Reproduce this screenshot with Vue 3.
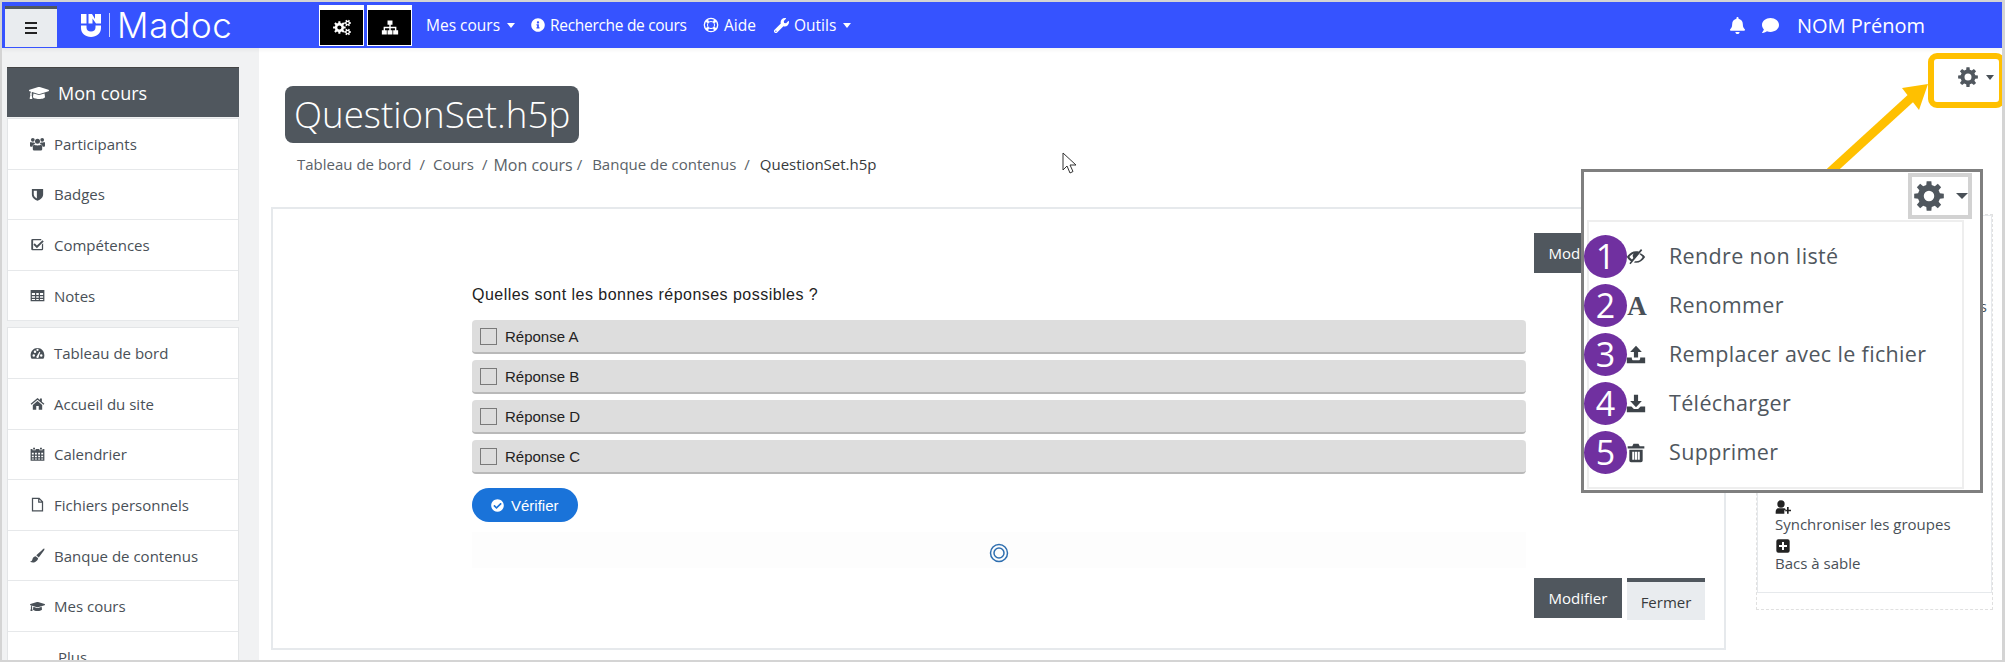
<template>
  <div class="page">
    <header class="nav">
      <button class="burger"><span></span><span></span><span></span></button>
      <div class="logo">
        <svg class="logo-mark" viewBox="0 0 20 23" fill="#fff">
          <rect x="0" y="0" width="5.500" height="9.500" />
          <path d="M7.500 0h3.500l3 5V0H20v9.500h-5l-3.500-5v5h-4z" />
          <path d="M0 11.500h5.500v2c0 2.500 1.800 4 4.500 4s4.500-1.500 4.500-4v-2H20v2.500c0 5.500-4.500 9-10 9S0 19.500 0 14z" />
        </svg>
        <i class="logo-bar"></i>
        <span class="logo-text">Madoc</span>
      </div>
      <div class="blackbtns">
        <div class="blackbtn"><Ico name="cogs" /></div>
        <div class="blackbtn"><Ico name="sitemap" /></div>
      </div>
      <nav class="menu">
        <a class="w1">Mes cours <b class="caret"></b></a>
        <a class="w2"><Ico name="info" />Recherche de cours</a>
        <a class="w3"><Ico name="ring" />Aide</a>
        <a class="w4"><Ico name="wrench" />Outils <b class="caret"></b></a>
      </nav>
      <div class="user">
        <Ico name="bell" class="bell" />
        <Ico name="comment" class="comment" />
        <span class="uname">NOM Prénom</span>
      </div>
    </header>

    <div class="layout">
      <aside class="side">
        <div class="side-head"><Ico name="cap" />Mon cours</div>
        <ul class="side-list">
          <li v-for="it in courseLinks" :key="it.label"><Ico :name="it.icon" />{{ it.label }}</li>
        </ul>
        <ul class="side-list second">
          <li v-for="it in siteLinks" :key="it.label"><Ico :name="it.icon" />{{ it.label }}</li>
          <li class="plus">Plus</li>
        </ul>
      </aside>

      <main class="main">
        <h1 class="title">QuestionSet.h5p</h1>
        <div class="crumbs">
          <span>Tableau de bord</span><i>/</i><span>Cours</span><i>/</i><span class="big">Mon cours</span><i class="tight">/</i><span>Banque de contenus</span><i>/</i><span class="cur">QuestionSet.h5p</span>
        </div>
        <div class="content">
          <section class="card">
            <div class="btnrow top"><button class="btn-dark">Modifier</button></div>
            <div class="h5p">
              <p class="question">Quelles sont les bonnes réponses possibles ?</p>
              <div v-for="a in answers" :key="a" class="answer"><i class="box"></i>{{ a }}</div>
              <button class="check"><Ico name="check" />Vérifier</button>
              <div class="band">
                <svg class="spin" viewBox="0 0 20 20" fill="none" stroke="#2f6fb0"><circle cx="10" cy="10" r="8.500" stroke-width="1.500" /><circle cx="10" cy="10" r="5" stroke-width="1.500" /></svg>
              </div>
            </div>
            <div class="btnrow">
              <button class="btn-dark">Modifier</button>
              <button class="btn-light">Fermer</button>
            </div>
          </section>
          <div class="dash">
            <div class="inner">
              <p class="hidden-item">Contextes</p>
              <div class="tool"><Ico name="userplus" /><span>Synchroniser les groupes</span></div>
              <div class="tool"><Ico name="plussq" /><span>Bacs à sable</span></div>
            </div>
          </div>
        </div>
      </main>
    </div>

    <!-- annotations drawn over the screenshot -->
    <svg class="arrow" viewBox="0 0 110 110">
      <path d="M12 110 93 36" stroke="#ffc000" stroke-width="9" fill="none" />
      <path d="M110 22 84 26 101 48z" fill="#ffc000" />
    </svg>
    <div class="hl"><Ico name="cog" class="hl-cog" /><b class="caret dark"></b></div>
    <svg class="cursor" viewBox="0 0 15 23"><path d="M1 1v17l4-4 3 7 3-1.500-3-6.500h6z" fill="#fff" stroke="#333" stroke-width="1" /></svg>

    <div class="popup">
      <div class="pop-top"><div class="pop-gear"><Ico name="cog" class="pop-cog" /><b class="caret dark big"></b></div></div>
      <ul class="pop-menu">
        <li v-for="(m, i) in actions" :key="m.label">
          <span class="num">{{ i + 1 }}</span>
          <span class="pop-ico"><b v-if="m.letter" class="letter">A</b><Ico v-else :name="m.icon" /></span>
          <span class="pop-label">{{ m.label }}</span>
        </li>
      </ul>
    </div>
  </div>
</template>

<script setup>
import { h } from 'vue'

// cog outlines are computed, the 8 teeth are easier that way
const gear = (cx, cy, ro, ri, hole, n = 8) => {
  const pt = (r, a) => `${(cx + r * Math.cos(a)).toFixed(2)} ${(cy + r * Math.sin(a)).toFixed(2)}`
  let d = ''
  for (let i = 0; i < n; i++) {
    const a = (i * 2 * Math.PI) / n
    const w = Math.PI / n
    d += `${i ? 'L' : 'M'}${pt(ri, a - w * 0.62)}L${pt(ro, a - w * 0.4)}L${pt(ro, a + w * 0.4)}L${pt(ri, a + w * 0.62)}`
  }
  d += `zM${cx - hole} ${cy}a${hole} ${hole} 0 1 0 ${hole * 2} 0a${hole} ${hole} 0 1 0 ${-hole * 2} 0z`
  return d
}

const icons = {
  cog: ['0 0 24 24', gear(12, 12, 12, 9, 4.2)],
  cogs: ['0 0 24 22', gear(8.5, 11, 8.5, 6.2, 2.8) + gear(19.5, 5, 4.5, 3.2, 1.5, 6) + gear(19.5, 17, 4.5, 3.2, 1.5, 6)],
  bell: ['0 0 448 512', 'M224 512c35.32 0 63.97-28.65 63.97-64H160.03c0 35.35 28.65 64 63.97 64zm215.39-149.71c-19.32-20.76-55.47-51.99-55.47-154.29 0-77.7-54.48-139.9-127.94-155.16V32c0-17.67-14.32-32-31.98-32s-31.98 14.33-31.98 32v20.84C118.56 68.1 64.08 130.3 64.08 208c0 102.3-36.15 133.53-55.47 154.29-6 6.45-8.66 14.16-8.61 21.71.11 16.4 12.98 32 32.1 32h383.8c19.12 0 32-15.6 32.1-32 .05-7.55-2.61-15.27-8.61-21.71z'],
  comment: ['0 0 512 512', 'M256 32C114.6 32 0 125.1 0 240c0 49.6 21.4 95 57 130.7C44.5 421.1 2.7 466 2.2 466.5c-2.2 2.3-2.8 5.7-1.5 8.7S4.8 480 8 480c66.3 0 116-31.8 140.6-51.4 32.7 12.3 69 19.4 107.4 19.4 141.4 0 256-93.1 256-208S397.4 32 256 32z'],
  check: ['0 0 512 512', 'M504 256c0 136.967-111.033 248-248 248S8 392.967 8 256 119.033 8 256 8s248 111.033 248 248zM227.314 387.314l184-184c6.248-6.248 6.248-16.379 0-22.627l-22.627-22.627c-6.248-6.249-16.379-6.249-22.628 0L216 308.118l-69.059-69.059c-6.248-6.248-16.379-6.248-22.628 0l-22.627 22.627c-6.248 6.248-6.248 16.379 0 22.627l104 104c6.249 6.249 16.379 6.249 22.628.001z'],
  info: ['0 0 512 512', 'M256 8C119.043 8 8 119.083 8 256c0 136.997 111.043 248 248 248s248-111.003 248-248C504 119.083 392.957 8 256 8zm0 110c23.196 0 42 18.804 42 42s-18.804 42-42 42-42-18.804-42-42 18.804-42 42-42zm56 254c0 6.627-5.373 12-12 12h-88c-6.627 0-12-5.373-12-12v-24c0-6.627 5.373-12 12-12h12v-64h-12c-6.627 0-12-5.373-12-12v-24c0-6.627 5.373-12 12-12h64c6.627 0 12 5.373 12 12v100h12c6.627 0 12 5.373 12 12v24z'],
  wrench: ['0 0 512 512', 'M507.73 109.1c-2.24-9.03-13.54-12.09-20.12-5.51l-74.36 74.36-67.88-11.31-11.31-67.88 74.36-74.36c6.62-6.62 3.43-17.9-5.66-20.16-47.38-11.74-99.55.91-136.58 37.93-39.64 39.64-50.55 97.1-34.05 147.2L18.74 402.76c-24.99 24.99-24.99 65.51 0 90.5 24.99 24.99 65.51 24.99 90.5 0l213.21-213.21c50.12 16.71 107.47 5.68 147.37-34.22 37.07-37.07 49.7-89.32 37.91-136.73zM64 472c-13.25 0-24-10.75-24-24 0-13.26 10.75-24 24-24s24 10.74 24 24c0 13.25-10.75 24-24 24z'],
  cap: ['0 0 640 512', 'M622.34 153.2L343.4 67.5c-15.2-4.67-31.6-4.67-46.79 0L17.66 153.2c-23.54 7.23-23.54 38.36 0 45.59l48.63 14.94c-10.67 13.19-17.23 29.28-17.88 46.9C38.78 266.15 32 276.11 32 288c0 10.78 5.68 19.85 13.86 25.65L20.33 428.53C18.11 438.52 25.71 448 35.94 448h56.11c10.24 0 17.84-9.48 15.62-19.47L82.14 313.65C90.32 307.85 96 298.78 96 288c0-11.57-6.47-21.25-15.66-26.87.76-15.02 8.44-28.3 20.69-36.72L296.6 284.5c9.06 2.78 26.44 6.25 46.79 0l278.95-85.7c23.55-7.24 23.55-38.36 0-45.6zM352.79 315.09c-28.53 8.76-52.84 3.92-65.59 0l-145.02-44.55L128 384c0 35.35 85.96 64 192 64s192-28.65 192-64l-14.18-113.47-145.03 44.56z'],
  users: ['0 0 24 22', 'M12 3.500a4 4 0 1 1 0 8 4 4 0 0 1 0-8zM4.500 2a3 3 0 1 1 0 6 3 3 0 0 1 0-6zm15 0a3 3 0 1 1 0 6 3 3 0 0 1 0-6zM6.500 13c1 .5 2.500 1 5.500 1s4.500-.5 5.500-1c1.500.5 2 2 2 4v3c0 1-1 2-2 2h-11c-1 0-2-1-2-2v-3c0-2 .5-3.500 2-4zM0 10.500C0 9.500.5 8.500 1.500 8.500c1 .7 2 1 3 1h2.300c.3 1 1 1.800 1.700 2.400-2.500.3-4.500 2-4.700 4.100H1.500C.5 16 0 15.500 0 14.500zm24 0v4c0 1-.5 1.500-1.500 1.500h-2.300c-.2-2.100-2.200-3.800-4.700-4.100.7-.6 1.400-1.400 1.700-2.400h2.300c1 0 2-.3 3-1 1 0 1.500 1 1.500 2z'],
  shield: ['0 0 24 24', 'M3 3h18v9c0 5-4 8-9 10-5-2-9-5-9-10zm3 3v6c0 3 3 5 5 6.500V6z'],
  checksq: ['0 0 24 24', 'M4 3h14v2H5v14h14v-7l2-2v9a2 2 0 0 1-2 2H4a2 2 0 0 1-2-2V5a2 2 0 0 1 2-2zm3.500 7L11 13.500 20 5l2 2-11 11-5.500-5.500z'],
  table: ['0 0 24 24', 'M1 3h22v18H1zm2 5v3h5V8zm7 0v3h4V8zm6 0v3h5V8zM3 13v2.500h5V13zm7 0v2.500h4V13zm6 0v2.500h5V13zM3 17.500V19h5v-1.500zm7 0V19h4v-1.500zm6 0V19h5v-1.500z'],
  gauge: ['0 0 24 24', 'M12 3C5.500 3 1 8.500 1 15c0 2 .5 4 1.500 5.500h19C22.500 19 23 17 23 15 23 8.500 18.500 3 12 3zM6 17a2 2 0 1 1 0-4 2 2 0 0 1 0 4zm2-6a2 2 0 1 1 0-4 2 2 0 0 1 0 4zm5.500 7.500a2 2 0 0 1-3 0c-.5-.8-.3-2 .5-2.500l4-7 1.500.7-2.500 7c.5.500.5 1.200-.5 1.800zM12 8a1.800 1.800 0 1 1 0-3.600A1.800 1.800 0 0 1 12 8zm6 9a2 2 0 1 1 0-4 2 2 0 0 1 0 4z'],
  home: ['0 0 24 24', 'M12 3 1 12.500l1.300 1.500L12 6l9.700 8 1.300-1.500-4-3.500V4h-3v2.400zM4.500 14.500V22h5.500v-6h4v6h5.500v-7.500L12 8z'],
  calendar: ['0 0 24 24', 'M5 1h3v3H5zm11 0h3v3h-3zM1 3h3v2h5V3h6v2h5V3h3v19H1zm2 6v3h3V9zm5 0v3h3V9zm5 0v3h3V9zm5 0v3h3V9zM3 14v2.500h3V14zm5 0v2.500h3V14zm5 0v2.500h3V14zm5 0v2.500h3V14zM3 18.500V20h3v-1.500zm5 0V20h3v-1.500zm5 0V20h3v-1.500zm5 0V20h3v-1.500z'],
  file: ['0 0 24 24', 'M3 1h12l6 6v16H3zm2 2v18h14V9h-6V3zm10 .8V7h3.200z'],
  brush: ['0 0 24 24', 'M23 1c.5.500 0 2-1 3.500L14 15l-4-3.500L19.500 3C21 1.500 22.500.500 23 1zM9 13l4 3.500c-.5 3-3 6-6.500 6.500C4 23.300 2 23 0 21.500c2 0 3.500-1 3.800-3C4.200 16 5.500 13.500 9 13z'],
  sitemap: ['0 0 24 24', 'M8.500 2h7v6H13v3h8v5h2.500v6h-7v-6H19v-3h-6v3h2.500v6h-7v-6H11v-3H5v3h2.500v6h-7v-6H3v-5h8V8H8.500z'],
  userplus: ['0 0 24 24', 'M9 2a5.500 5.500 0 1 1 0 11A5.500 5.500 0 0 1 9 2zM1 22v-3c0-3 2-5 4-5h8c2 0 3.500 1.200 4 3h-3v5zM18 12h2.500v4H24v2.500h-3.500V22H18v-3.500h-3V16h3z'],
  plussq: ['0 0 24 24', 'M5 2h14a3 3 0 0 1 3 3v14a3 3 0 0 1-3 3H5a3 3 0 0 1-3-3V5a3 3 0 0 1 3-3zm5.500 4v4.500H6v3h4.500V18h3v-4.500H18v-3h-4.500V6z'],
  eyeoff: ['0 0 24 24', 'M1 12c3-4.500 6.500-7 11-7 1.200 0 2.300.2 3.400.500L18 2.500l1.500 1.300-14 17L4 19.500l2-2.400C4 16 2.300 14.300 1 12zm3 0c.9 1.200 2 2.200 3.200 3l1.600-1.900C8.300 12.400 8 11.300 8 10.500c0-1 .6-2 1.500-2.800C7.500 8.500 5.500 10 4 12zm13.500-4.600c2.200 1.100 4 2.700 5.500 4.600-3 4.500-6.500 7-11 7l-2.500-.3 1.300-1.500h1.200c3.500 0 6.200-1.900 8-5.200-1-1.200-2.400-2.400-3.800-3.200z'],
  upload: ['0 0 24 24', 'M12 1l7 7.500h-4.500V15h-5V8.500H5zM1 15h6v1.500c0 1 .8 1.800 1.800 1.800h6.400c1 0 1.800-.8 1.800-1.800V15h6v7H1z'],
  download: ['0 0 24 24', 'M9.500 1h5v7.500H19L12 16 5 8.500h4.500zM1 15h5.500l3 3h5l3-3H23v7H1z'],
  trash: ['0 0 24 24', 'M9 1h6l1.500 3H22v2.500H2V4h5.500zM4 8h16v13a2 2 0 0 1-2 2H6a2 2 0 0 1-2-2zm3.500 2.500v9.500H10v-9.500zm3.300 0v9.500h2.400v-9.500zm3.200 0v9.500h2.500v-9.500z'],
  ring: ['0 0 24 24', 'M12 1a11 11 0 1 1 0 22 11 11 0 0 1 0-22zM12 7.500a4.500 4.500 0 1 0 0 9 4.500 4.500 0 0 0 0-9zM7.500 4.200A9 9 0 0 1 16.500 4.200L15 6.800A6 6 0 0 0 9 6.800zM19.800 7.500A9 9 0 0 1 19.800 16.500L17.200 15A6 6 0 0 0 17.200 9zM16.500 19.800A9 9 0 0 1 7.500 19.800L9 17.200A6 6 0 0 0 15 17.200zM4.200 16.500A9 9 0 0 1 4.200 7.500L6.800 9A6 6 0 0 0 6.800 15z'],
}

const Ico = (props) => {
  const [vb, d] = icons[props.name]
  return h('svg', { viewBox: vb, class: 'ico', fill: 'currentColor', 'fill-rule': 'evenodd' }, [h('path', { d })])
}
Ico.props = ['name']

const courseLinks = [
  { label: 'Participants', icon: 'users' },
  { label: 'Badges', icon: 'shield' },
  { label: 'Compétences', icon: 'checksq' },
  { label: 'Notes', icon: 'table' },
]
const siteLinks = [
  { label: 'Tableau de bord', icon: 'gauge' },
  { label: 'Accueil du site', icon: 'home' },
  { label: 'Calendrier', icon: 'calendar' },
  { label: 'Fichiers personnels', icon: 'file' },
  { label: 'Banque de contenus', icon: 'brush' },
  { label: 'Mes cours', icon: 'cap' },
]
const answers = ['Réponse A', 'Réponse B', 'Réponse D', 'Réponse C']
const actions = [
  { label: 'Rendre non listé', icon: 'eyeoff' },
  { label: 'Renommer', letter: true },
  { label: 'Remplacer avec le fichier', icon: 'upload' },
  { label: 'Télécharger', icon: 'download' },
  { label: 'Supprimer', icon: 'trash' },
]
</script>

<style>
html, body { margin: 0; background: #fff; }
</style>

<style scoped>
.page { position: relative; width: 2005px; height: 662px; box-sizing: border-box; border: 2px solid #d4d4d4; border-right-width: 3px; overflow: hidden; display: flex; flex-direction: column; font-family: "Open Sans", sans-serif; color: #495057; background: #fff; }
.ico { display: block; width: 16px; height: 16px; flex-shrink: 0; }
p, h1, ul { margin: 0; padding: 0; list-style: none; }
button { font-family: inherit; border: 0; padding: 0; }

.nav { height: 46px; flex-shrink: 0; background: #3653ff; display: flex; align-items: center; color: #fff; box-shadow: 0 2px 4px rgba(0,0,0,.05); z-index: 1; }
.burger { width: 52px; height: 41px; margin: 3px 0 0 3px; background: #e9ecef; border-top: 3px solid #50575e; box-sizing: border-box; display: flex; flex-direction: column; gap: 3px; align-items: center; justify-content: center; }
.burger span { width: 12px; height: 2px; background: #222; }
.logo { display: flex; align-items: center; margin-left: 24px; width: 238px; }
.logo-mark { width: 20px; height: 23px; }
.logo-bar { width: 1px; height: 24px; background: #c9d2ff; margin: 0 7px 0 8px; }
.logo-text { font-family: Inter, sans-serif; font-size: 35px; font-weight: 300; line-height: 46px; letter-spacing: .700px; }
.blackbtns { display: flex; gap: 3px; height: 41px; }
.blackbtn { width: 45px; box-sizing: border-box; background: #000; border: 1px solid #fff; border-top-width: 5px; display: flex; align-items: center; justify-content: center; color: #fff; }
.blackbtn .ico { width: 18px; height: 17px; }
.menu { display: flex; align-items: center; margin-left: 14px; font-size: 15.500px; }
.menu a { display: flex; align-items: center; }
.menu .ico { margin-right: 5px; width: 14px; height: 14px; }
.w1 { width: 105px; }
.w2 { width: 172px; letter-spacing: -.300px; }
.w3 { width: 71px; }
.w4 { width: 100px; }
.caret { display: inline-block; width: 0; height: 0; margin-left: 7px; border: 4px solid transparent; border-top: 5px solid #fff; border-bottom: 0; }
.caret.dark { border-top-color: #495057; }
.caret.big { border-width: 6px; border-top-width: 6px; border-bottom: 0; margin-left: 12px; }
.menu .w3 .ico { width: 16px; height: 16px; }
.menu .w4 .ico { width: 15px; height: 15px; }
.user { margin-left: auto; display: flex; align-items: center; margin-right: 77px; }
.bell { width: 15px; height: 17px; }
.comment { width: 17px; height: 17px; margin-left: 17px; }
.uname { margin-left: 18px; font-size: 20px; }

.layout { flex: 1; display: flex; min-height: 0; }
.side { width: 257px; flex-shrink: 0; box-sizing: border-box; padding: 19px 20px 0 5px; background: #f1f2f3; overflow: hidden; }
.side-head { height: 50px; background: #50575e; color: #fff; display: flex; align-items: center; padding-left: 22px; font-size: 18px; margin-bottom: 1px; border-top: 1px solid #444; box-sizing: border-box; }
.side-head .ico { width: 20px; margin-right: 9px; }
.side-list { background: #fff; border: 1px solid #e3e5e7; border-bottom: 0; }
.side-list li { height: 50.600px; box-sizing: border-box; display: flex; align-items: center; padding-left: 22px; font-size: 15px; border-bottom: 1.500px solid #e6e8ea; }
.side-list .ico { width: 15px; height: 15px; margin-right: 9px; }
.second { margin-top: 6px; }
.side-list .plus { padding-left: 50px; }

.main { flex: 1; min-width: 0; display: flex; flex-direction: column; padding: 38px 9px 0 12px; }
.title { align-self: flex-start; margin-left: 14px; height: 57px; padding: 0 9px; border-radius: 8px; background: #50575e; color: #fff; font-size: 36.700px; font-weight: 300; line-height: 57px; }
.crumbs { display: flex; align-items: center; height: 20px; margin: 11px 0 0 26px; font-size: 15px; color: #5a6268; }
.crumbs i { font-style: normal; margin: 0 8px; }
.crumbs i.tight { margin: 0 10px 0 4px; }
.crumbs .big { font-size: 16px; margin: 2px 0 0 -2px; }
.crumbs .cur { color: #373a3c; margin-left: 2px; }
.content { display: flex; margin-top: 33px; }
.card { width: 1455px; height: 443px; box-sizing: border-box; border: 2px solid #e6e9ec; padding-top: 24px; }
.btnrow { display: flex; gap: 5px; padding-left: 1261px; align-items: flex-start; margin-top: 10px; }
.btnrow.top { margin-top: 0; height: 40px; }
.btn-dark { width: 88px; height: 40px; background: #50575e; color: #fff; font-size: 15px; }
.btn-light { width: 78px; height: 42px; background: #e9ecef; color: #373a3c; font-size: 15px; border-top: 4px solid #50575e; padding-top: 2px; }
.h5p { width: 1054px; margin-left: 199px; font-family: "Liberation Sans", Arial, sans-serif; color: #222; }
.question { font-size: 16px; line-height: 22px; margin: 11px 0 14px; letter-spacing: .470px; }
.answer { height: 34px; margin-bottom: 6px; box-sizing: border-box; background: #ddd; border-bottom: 2px solid #b9b9b9; border-radius: 4px; display: flex; align-items: center; padding-left: 8px; font-size: 15px; }
.box { width: 15px; height: 15px; border: 1px solid #7a7a7a; margin-right: 8px; }
.check { display: flex; align-items: center; gap: 7px; width: 106px; height: 34px; margin-top: 14px; padding-left: 19px; border-radius: 17px; background: #1a73d9; color: #fff; font-family: inherit; font-size: 15px; }
.check .ico { width: 13px; height: 13px; }
.band { height: 36px; box-sizing: border-box; padding-top: 5px; margin-top: 10px; background: #fdfdfd; display: flex; align-items: center; justify-content: center; }
.spin { width: 20px; height: 20px; }

.dash { width: 237px; height: 396px; margin: 7px 0 0 30px; box-sizing: border-box; border: 1.500px dashed #e0e0e0; }
.inner { height: 378px; box-sizing: border-box; border: 1.500px solid #e6e9ec; padding: 283px 0 0 17px; font-size: 15px; position: relative; }
.hidden-item { position: absolute; top: 80px; right: 4px; }
.tool { margin-bottom: 5px; line-height: 18px; white-space: nowrap; }
.tool .ico { width: 16px; height: 16px; color: #222; }

.hl { position: absolute; left: 1926px; top: 51px; width: 77px; height: 55px; box-sizing: border-box; border: 6px solid #ffc000; border-radius: 9px; display: flex; align-items: center; padding: 0 0 7px 24px; }
.hl-cog { width: 20px; height: 20px; color: #50575e; }
.hl .caret { margin-left: 8px; }
.arrow { position: absolute; left: 1816px; top: 60px; width: 110px; height: 110px; overflow: visible; }
.cursor { position: absolute; left: 1060px; top: 150px; width: 15px; height: 23px; }

.popup { position: absolute; left: 1579px; top: 167px; width: 402px; height: 324px; box-sizing: border-box; border: 3px solid #7f7f7f; background: #fff; }
.pop-top { height: 47px; padding: 1px 8px 0 0; display: flex; justify-content: flex-end; }
.pop-gear { width: 64px; height: 46px; box-sizing: border-box; border: 4px solid #d2d2d2; display: flex; align-items: center; padding-left: 2px; }
.pop-cog { width: 30px; height: 30px; color: #50575e; }
.pop-menu { margin-left: 3px; width: 377px; height: 269px; box-sizing: border-box; border: 2px solid #eee; padding-top: 10px; }
.pop-menu li { position: relative; height: 49px; display: flex; align-items: center; color: #50575e; font-size: 21.500px; }
.num { position: absolute; left: -5px; top: 3px; width: 43px; height: 43px; border-radius: 50%; background: #7030a0; color: #fff; font-size: 34px; line-height: 43px; text-align: center; }
.pop-ico { width: 20px; margin-left: 37px; display: flex; justify-content: center; }
.pop-ico .ico { width: 20px; height: 20px; color: #3d4349; }
.letter { font-family: "Liberation Serif", serif; font-size: 27px; line-height: 26px; color: #495057; margin-left: 2px; }
.pop-label { margin: -2px 0 0 23px; letter-spacing: .350px; }
</style>
